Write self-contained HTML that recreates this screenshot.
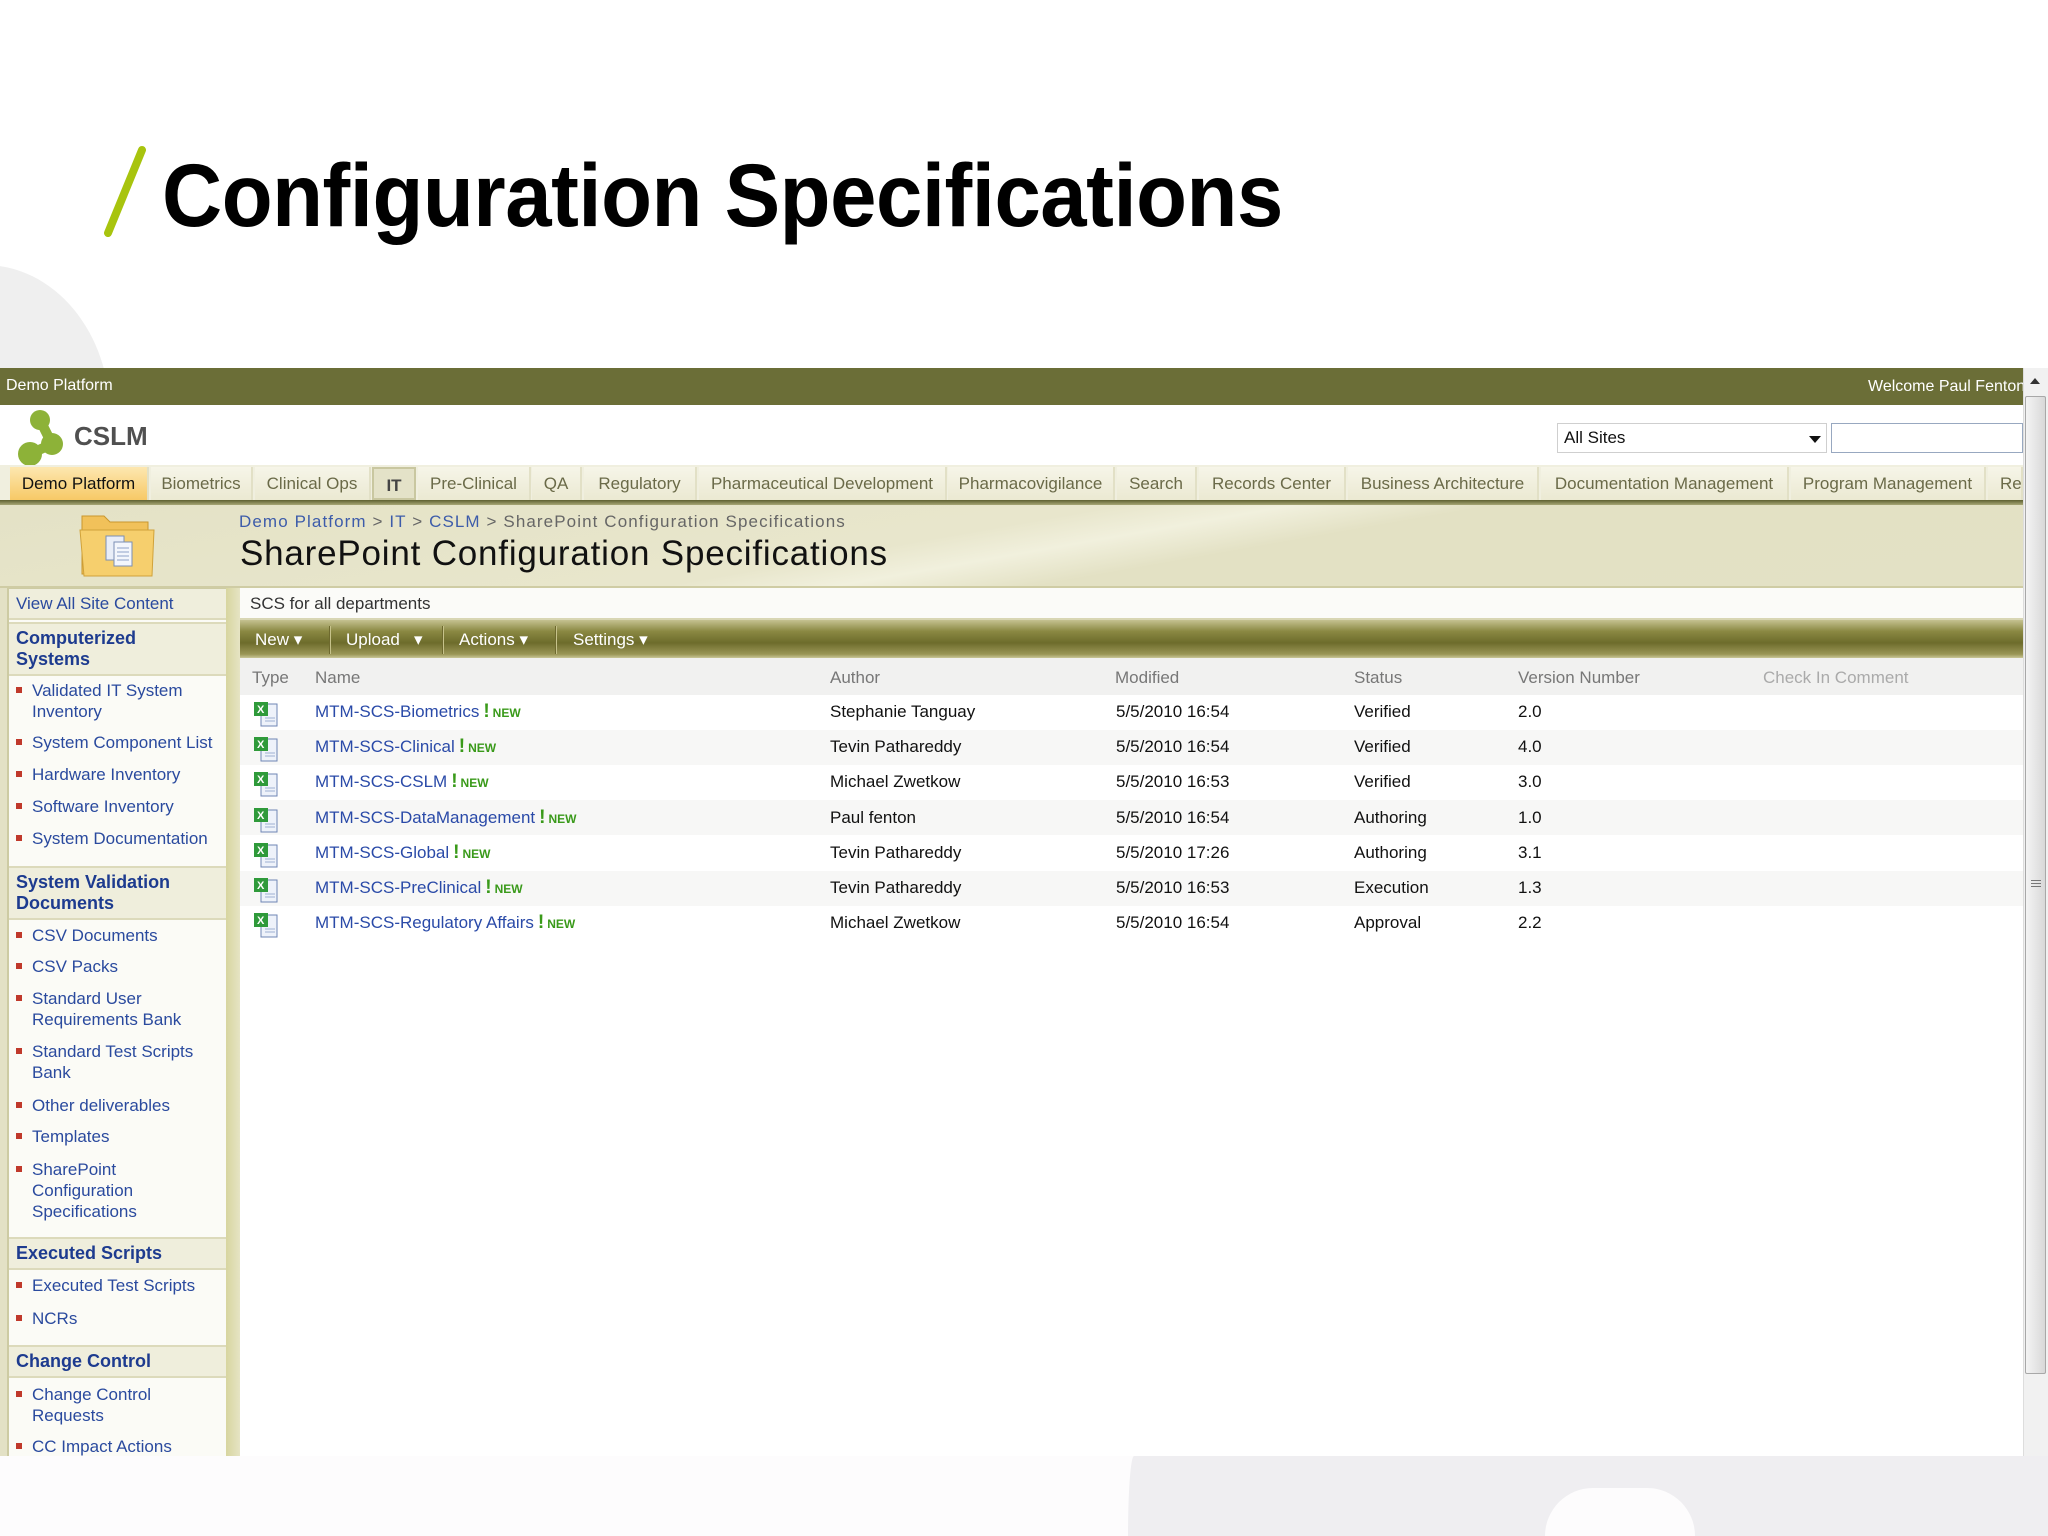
<!DOCTYPE html>
<html style="overflow:hidden;width:2048px;height:1536px"><head><meta charset="utf-8">
<style>
*{margin:0;padding:0;box-sizing:border-box}
body{width:2048px;height:1536px;position:relative;overflow:hidden;background:#fff;font-family:"Liberation Sans",sans-serif}
.a{position:absolute;white-space:nowrap}
.t{font-size:17px;line-height:20px}
.tab{position:absolute;top:467px;height:33px;border-right:2px solid #e2e0c6;background:linear-gradient(#f6f5e8,#ebe9d2);color:#6a6a48;font-size:17px;line-height:33px;text-align:center;white-space:nowrap;overflow:hidden}
.nl{position:absolute;left:32px;font-size:17px;line-height:21px;color:#2a4a9e;white-space:nowrap}
.nl:before{content:"";position:absolute;left:-16px;top:7px;width:6px;height:6px;background:#c0392b}
.nh{position:absolute;left:9px;width:217px;background:#efeedc;border-top:2px solid #dcdabb;border-bottom:2px solid #dcdabb;color:#1d3b8f;font-weight:bold;font-size:18px;line-height:21px;padding:4px 7px}
.row{position:absolute;left:240px;width:1783px;height:35px}
.c{position:absolute;font-size:17px;line-height:20px;color:#111;white-space:nowrap}
.lk{color:#2a4aa8}
.nw{color:#3a9a1a;font-size:12px;font-weight:bold;margin-left:3px}
.ex{color:#3a9a1a;font-weight:bold;font-size:19px;margin-left:4px}
.hd{position:absolute;top:668px;font-size:17px;color:#777;white-space:nowrap}
.tb{position:absolute;top:630px;color:#fff;font-size:17px;white-space:nowrap}
.sep{position:absolute;top:626px;width:2px;height:28px;background:#c6c28a;border-left:1px solid #6e6a2e}
</style></head><body>
<div class="a" style="left:-140px;top:265px;width:250px;height:300px;border-radius:50%;background:#efefef"></div>
<div class="a" style="left:0;top:1456px;width:2048px;height:80px;background:#fdfcfd"></div>
<div class="a" style="left:1128px;top:1456px;width:920px;height:80px;background:#efeef1;border-top-left-radius:30px 400px"></div>
<div class="a" style="left:1545px;top:1488px;width:150px;height:48px;border-radius:75px 75px 0 0;background:#fdfcfd"></div>

<svg class="a" style="left:100px;top:145px" width="50" height="95"><line x1="42" y1="5" x2="8" y2="88" stroke="#a8c40e" stroke-width="8" stroke-linecap="round"/></svg>
<div class="a" style="left:162px;top:140px;font-size:89px;font-weight:bold;color:#000;line-height:110px;transform:scaleX(0.936);transform-origin:left top;letter-spacing:-0.5px">Configuration Specifications</div>

<div class="a" style="left:0;top:368px;width:2023px;height:37px;background:#6b6e37"></div>
<div class="a t" style="left:6px;top:376px;color:#fff;font-size:16px">Demo Platform</div>
<div class="a t" style="left:1868px;top:377px;color:#fff;font-size:16px;width:155px;overflow:hidden">Welcome Paul Fenton</div>
<div class="a" style="left:0;top:405px;width:2023px;height:62px;background:#fff"></div>
<svg class="a" style="left:12px;top:408px" width="60" height="60">
<g fill="#8db238" stroke="#8db238" stroke-width="10" stroke-linecap="round"><line x1="28" y1="12" x2="40" y2="36"/><line x1="40" y1="36" x2="18" y2="46"/></g>
<circle cx="28" cy="12" r="10" fill="#8db238"/><circle cx="40" cy="36" r="11" fill="#8db238"/><circle cx="18" cy="46" r="12" fill="#8db238"/></svg>
<div class="a" style="left:74px;top:420px;font-size:26px;font-weight:bold;color:#505050;line-height:32px">CSLM</div>
<div class="a" style="left:1557px;top:423px;width:270px;height:30px;border:1px solid #cfcfcf;background:#fff"></div>
<div class="a t" style="left:1564px;top:428px;color:#111;font-size:17px">All Sites</div>
<div class="a" style="left:1809px;top:436px;border-left:6px solid transparent;border-right:6px solid transparent;border-top:7px solid #111"></div>
<div class="a" style="left:1831px;top:423px;width:192px;height:30px;border:1px solid #98a8c0;background:#fff"></div>

<div class="a" style="left:0;top:465px;width:2023px;height:36px;background:#f0efdf"></div>
<div class="tab" style="left:10px;width:139px;background:linear-gradient(#fde7b0,#f7c966);color:#111">Demo Platform</div>
<div class="tab" style="left:151px;width:102px">Biometrics</div>
<div class="tab" style="left:255px;width:116px">Clinical Ops</div>
<div class="tab" style="left:372px;width:44px;background:#e4e2c8;border:2px solid #c9c7a0;font-weight:bold;color:#444">IT</div>
<div class="tab" style="left:418px;width:113px">Pre-Clinical</div>
<div class="tab" style="left:532px;width:50px">QA</div>
<div class="tab" style="left:584px;width:113px">Regulatory</div>
<div class="tab" style="left:699px;width:248px">Pharmaceutical Development</div>
<div class="tab" style="left:948px;width:167px">Pharmacovigilance</div>
<div class="tab" style="left:1117px;width:80px">Search</div>
<div class="tab" style="left:1199px;width:147px">Records Center</div>
<div class="tab" style="left:1348px;width:191px">Business Architecture</div>
<div class="tab" style="left:1541px;width:248px">Documentation Management</div>
<div class="tab" style="left:1791px;width:195px">Program Management</div>
<div class="tab" style="left:1988px;width:35px;text-align:left;padding-left:12px">Re</div>
<div class="a" style="left:0;top:500px;width:2023px;height:5px;background:linear-gradient(#5e6030,#a8a776)"></div>

<div class="a" style="left:0;top:505px;width:2023px;height:83px;background:linear-gradient(170deg,#e4e2c6 0%,#e8e6cc 45%,#f1f0dd 52%,#e3e1c4 60%,#e3e1c5 100%)"></div>
<div class="a" style="left:0;top:586px;width:2023px;height:2px;background:#cfcca4"></div>
<svg class="a" style="left:72px;top:508px" width="100" height="76">
<path d="M10 8 h22 l6 6 h38 v52 H10 z" fill="#f1c15a" stroke="#c9962e"/>
<path d="M8 22 h74 l-2 46 H12 z" fill="#f6cf6d" stroke="#d0a23a"/>
<rect x="34" y="28" width="18" height="24" fill="#e9eef8" stroke="#7b8fb5"/>
<rect x="42" y="34" width="18" height="24" fill="#f3f6fc" stroke="#7b8fb5"/>
<g stroke="#8fa2c8"><line x1="45" y1="40" x2="57" y2="40"/><line x1="45" y1="44" x2="57" y2="44"/><line x1="45" y1="48" x2="57" y2="48"/><line x1="45" y1="52" x2="57" y2="52"/></g>
</svg>
<div class="a" style="left:239px;top:512px;font-size:17px;letter-spacing:1.1px;color:#666;line-height:20px"><span style="color:#3d5caa">Demo Platform</span> &gt; <span style="color:#3d5caa">IT</span> &gt; <span style="color:#3d5caa">CSLM</span> &gt; SharePoint Configuration Specifications</div>
<div class="a" style="left:240px;top:533px;font-size:35px;color:#111;line-height:42px;letter-spacing:0.8px">SharePoint Configuration Specifications</div>

<div class="a" style="left:0;top:588px;width:9px;height:868px;background:#e3e1c5"></div>
<div class="a" style="left:7px;top:588px;width:221px;height:868px;background:#fbfbf6;border:2px solid #cdcba3;border-bottom:none"></div>
<div class="a" style="left:226px;top:588px;width:14px;height:868px;background:linear-gradient(90deg,#d7d59f,#e6e4c4)"></div>
<div class="nh" style="top:589px;font-weight:normal;font-size:17px;color:#2a4a9e;border-top:none">View All Site Content</div>
<div class="nh" style="top:622px">Computerized<br>Systems</div>
<div class="nl" style="top:680px">Validated IT System<br>Inventory</div>
<div class="nl" style="top:732px">System Component List</div>
<div class="nl" style="top:764px">Hardware Inventory</div>
<div class="nl" style="top:796px">Software Inventory</div>
<div class="nl" style="top:828px">System Documentation</div>
<div class="nh" style="top:866px">System Validation<br>Documents</div>
<div class="nl" style="top:925px">CSV Documents</div>
<div class="nl" style="top:956px">CSV Packs</div>
<div class="nl" style="top:988px">Standard User<br>Requirements Bank</div>
<div class="nl" style="top:1041px">Standard Test Scripts<br>Bank</div>
<div class="nl" style="top:1095px">Other deliverables</div>
<div class="nl" style="top:1126px">Templates</div>
<div class="nl" style="top:1159px">SharePoint<br>Configuration<br>Specifications</div>
<div class="nh" style="top:1237px">Executed Scripts</div>
<div class="nl" style="top:1275px">Executed Test Scripts</div>
<div class="nl" style="top:1308px">NCRs</div>
<div class="nh" style="top:1345px">Change Control</div>
<div class="nl" style="top:1384px">Change Control<br>Requests</div>
<div class="nl" style="top:1436px">CC Impact Actions</div>

<div class="a" style="left:240px;top:588px;width:1783px;height:868px;background:#fff"></div>
<div class="a" style="left:240px;top:588px;width:1783px;height:32px;background:#fbfbf8;border-bottom:2px solid #d8d6b4"></div>
<div class="a t" style="left:250px;top:594px;color:#333">SCS for all departments</div>
<div class="a" style="left:240px;top:620px;width:1783px;height:38px;background:linear-gradient(#c5c290 0%,#8a8842 30%,#6d6c2c 60%,#9a9656 90%,#c9c696 100%)"></div>
<div class="tb" style="left:255px">New ▾</div>
<div class="sep" style="left:329px"></div>
<div class="tb" style="left:346px">Upload &nbsp;&nbsp;▾</div>
<div class="sep" style="left:442px"></div>
<div class="tb" style="left:459px">Actions ▾</div>
<div class="sep" style="left:555px"></div>
<div class="tb" style="left:573px">Settings ▾</div>
<div class="a" style="left:240px;top:658px;width:1783px;height:37px;background:#f1f1f0"></div>
<div class="hd" style="left:252px">Type</div>
<div class="hd" style="left:315px">Name</div>
<div class="hd" style="left:830px">Author</div>
<div class="hd" style="left:1115px">Modified</div>
<div class="hd" style="left:1354px">Status</div>
<div class="hd" style="left:1518px">Version Number</div>
<div class="hd" style="left:1763px;color:#aaa">Check In Comment</div>

<svg width="0" height="0" style="position:absolute"><defs><g id="xl">
<rect x="9" y="4" width="16" height="22" fill="#eef2fa" stroke="#6f86b4"/>
<g stroke="#9fb0d2"><line x1="13" y1="18" x2="23" y2="18"/><line x1="13" y1="21" x2="23" y2="21"/></g>
<rect x="2" y="2" width="14" height="14" fill="#2f9a3a"/><text x="5" y="13" font-size="11" font-family="Liberation Sans" fill="#fff" font-weight="bold">X</text>
</g></defs></svg>

<div class="row" style="top:695px;background:#fff"></div>
<div class="row" style="top:730px;background:#f7f7f6"></div>
<div class="row" style="top:765px;background:#fff"></div>
<div class="row" style="top:800px;background:#f7f7f6"></div>
<div class="row" style="top:836px;background:#fff"></div>
<div class="row" style="top:871px;background:#f7f7f6"></div>
<div class="row" style="top:906px;background:#fff"></div>

<svg class="a" style="left:252px;top:700px" width="30" height="30"><use href="#xl"/></svg>
<svg class="a" style="left:252px;top:735px" width="30" height="30"><use href="#xl"/></svg>
<svg class="a" style="left:252px;top:770px" width="30" height="30"><use href="#xl"/></svg>
<svg class="a" style="left:252px;top:806px" width="30" height="30"><use href="#xl"/></svg>
<svg class="a" style="left:252px;top:841px" width="30" height="30"><use href="#xl"/></svg>
<svg class="a" style="left:252px;top:876px" width="30" height="30"><use href="#xl"/></svg>
<svg class="a" style="left:252px;top:911px" width="30" height="30"><use href="#xl"/></svg>

<div class="c lk" style="left:315px;top:702px">MTM-SCS-Biometrics<span class="ex">!</span><span class="nw">NEW</span></div>
<div class="c lk" style="left:315px;top:737px">MTM-SCS-Clinical<span class="ex">!</span><span class="nw">NEW</span></div>
<div class="c lk" style="left:315px;top:772px">MTM-SCS-CSLM<span class="ex">!</span><span class="nw">NEW</span></div>
<div class="c lk" style="left:315px;top:808px">MTM-SCS-DataManagement<span class="ex">!</span><span class="nw">NEW</span></div>
<div class="c lk" style="left:315px;top:843px">MTM-SCS-Global<span class="ex">!</span><span class="nw">NEW</span></div>
<div class="c lk" style="left:315px;top:878px">MTM-SCS-PreClinical<span class="ex">!</span><span class="nw">NEW</span></div>
<div class="c lk" style="left:315px;top:913px">MTM-SCS-Regulatory Affairs<span class="ex">!</span><span class="nw">NEW</span></div>

<div class="c" style="left:830px;top:702px">Stephanie Tanguay</div>
<div class="c" style="left:830px;top:737px">Tevin Pathareddy</div>
<div class="c" style="left:830px;top:772px">Michael Zwetkow</div>
<div class="c" style="left:830px;top:808px">Paul fenton</div>
<div class="c" style="left:830px;top:843px">Tevin Pathareddy</div>
<div class="c" style="left:830px;top:878px">Tevin Pathareddy</div>
<div class="c" style="left:830px;top:913px">Michael Zwetkow</div>

<div class="c" style="left:1116px;top:702px">5/5/2010 16:54</div>
<div class="c" style="left:1116px;top:737px">5/5/2010 16:54</div>
<div class="c" style="left:1116px;top:772px">5/5/2010 16:53</div>
<div class="c" style="left:1116px;top:808px">5/5/2010 16:54</div>
<div class="c" style="left:1116px;top:843px">5/5/2010 17:26</div>
<div class="c" style="left:1116px;top:878px">5/5/2010 16:53</div>
<div class="c" style="left:1116px;top:913px">5/5/2010 16:54</div>

<div class="c" style="left:1354px;top:702px">Verified</div>
<div class="c" style="left:1354px;top:737px">Verified</div>
<div class="c" style="left:1354px;top:772px">Verified</div>
<div class="c" style="left:1354px;top:808px">Authoring</div>
<div class="c" style="left:1354px;top:843px">Authoring</div>
<div class="c" style="left:1354px;top:878px">Execution</div>
<div class="c" style="left:1354px;top:913px">Approval</div>

<div class="c" style="left:1518px;top:702px">2.0</div>
<div class="c" style="left:1518px;top:737px">4.0</div>
<div class="c" style="left:1518px;top:772px">3.0</div>
<div class="c" style="left:1518px;top:808px">1.0</div>
<div class="c" style="left:1518px;top:843px">3.1</div>
<div class="c" style="left:1518px;top:878px">1.3</div>
<div class="c" style="left:1518px;top:913px">2.2</div>

<div class="a" style="left:2023px;top:368px;width:25px;height:1088px;background:#f1f1f1;border-left:1px solid #ddd"></div>
<div class="a" style="left:2030px;top:378px;border-left:5px solid transparent;border-right:5px solid transparent;border-bottom:6px solid #333"></div>
<div class="a" style="left:2025px;top:396px;width:21px;height:978px;background:linear-gradient(90deg,#f4f4f4,#d8d8d8);border:1px solid #a8a8a8;border-radius:2px"></div>
<div class="a" style="left:2031px;top:880px;width:10px;height:7px;border-top:1px solid #777;border-bottom:1px solid #777"></div>
<div class="a" style="left:2031px;top:883px;width:10px;height:1px;background:#777"></div>
</body></html>
